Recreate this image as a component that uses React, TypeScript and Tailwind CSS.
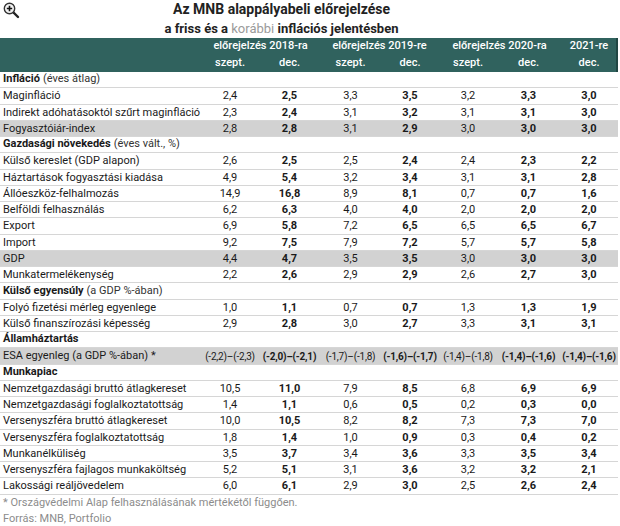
type Section = { kind: 'section'; bold: string; rest?: string }
type DataRow = { kind: 'data'; label: string; values: string[]; hl?: boolean; small?: boolean }
type Row = Section | DataRow

const sec = (bold: string, rest?: string): Section => ({ kind: 'section', bold, rest })
const row = (label: string, v: string, hl = false): DataRow => ({ kind: 'data', label, values: v.split(' '), hl })

const rows: Row[] = [
  sec('Infláció', '(éves átlag)'),
  row('Maginfláció', '2,4 2,5 3,3 3,5 3,2 3,3 3,0'),
  row('Indirekt adóhatásoktól szűrt maginfláció', '2,3 2,4 3,1 3,2 3,1 3,1 3,0'),
  row('Fogyasztóiár-index', '2,8 2,8 3,1 2,9 3,0 3,0 3,0', true),
  sec('Gazdasági növekedés', '(éves vált., %)'),
  row('Külső kereslet (GDP alapon)', '2,6 2,5 2,5 2,4 2,4 2,3 2,2'),
  row('Háztartások fogyasztási kiadása', '4,9 5,4 3,2 3,4 3,1 3,1 2,8'),
  row('Állóeszköz-felhalmozás', '14,9 16,8 8,9 8,1 0,7 0,7 1,6'),
  row('Belföldi felhasználás', '6,2 6,3 4,0 4,0 2,0 2,0 2,0'),
  row('Export', '6,9 5,8 7,2 6,5 6,5 6,5 6,7'),
  row('Import', '9,2 7,5 7,9 7,2 5,7 5,7 5,8'),
  row('GDP', '4,4 4,7 3,5 3,5 3,0 3,0 3,0', true),
  row('Munkatermelékenység', '2,2 2,6 2,9 2,9 2,6 2,7 3,0'),
  sec('Külső egyensúly', '(a GDP %-ában)'),
  row('Folyó fizetési mérleg egyenlege', '1,0 1,1 0,7 0,7 1,3 1,3 1,9'),
  row('Külső finanszírozási képesség', '2,9 2,8 3,0 2,7 3,3 3,1 3,1'),
  sec('Államháztartás'),
  {
    kind: 'data',
    label: 'ESA egyenleg (a GDP %-ában) *',
    values: ['(-2,2)–(-2,3)', '(-2,0)–(-2,1)', '(-1,7)–(-1,8)', '(-1,6)–(-1,7)', '(-1,4)–(-1,8)', '(-1,4)–(-1,6)', '(-1,4)–(-1,6)'],
    hl: true,
    small: true,
  },
  sec('Munkapiac'),
  row('Nemzetgazdasági bruttó átlagkereset', '10,5 11,0 7,9 8,5 6,8 6,9 6,9'),
  row('Nemzetgazdasági foglalkoztatottság', '1,4 1,1 0,6 0,5 0,2 0,3 0,0'),
  row('Versenyszféra bruttó átlagkereset', '10,0 10,5 8,2 8,2 7,3 7,3 7,0'),
  row('Versenyszféra foglalkoztatottság', '1,8 1,4 1,0 0,9 0,3 0,4 0,2'),
  row('Munkanélküliség', '3,5 3,7 3,4 3,6 3,3 3,5 3,4'),
  row('Versenyszféra fajlagos munkaköltség', '5,2 5,1 3,1 3,6 3,2 3,2 2,1'),
  row('Lakossági reáljövedelem', '6,0 6,1 2,9 3,0 2,5 2,6 2,4'),
]

// dec. columns are bold
const boldCol = [false, true, false, true, false, true, true]

const grid = 'grid grid-cols-[201px_58px_61px_61px_58px_58px_63px_58px]'

function Magnifier() {
  return (
    <svg width="18" height="18" viewBox="0 0 18 18" className="absolute left-[2px] top-[1px]">
      <line x1="11.5" y1="11.5" x2="16" y2="16" stroke="#222" strokeWidth="2.4" strokeLinecap="round" />
      <circle cx="7.5" cy="7.5" r="5.2" fill="#f4f4f4" stroke="#333" strokeWidth="1.4" />
      <path d="M7.5 4.8v5.4M4.8 7.5h5.4" stroke="#111" strokeWidth="1.6" />
    </svg>
  )
}

export default function App() {
  return (
    <div className="relative w-[620px] h-[526px] bg-white overflow-hidden font-['Roboto',sans-serif] text-[#1a1a1a]">
      <Magnifier />
      <div className="w-[563px] text-center font-bold leading-[19px] text-[#222]">
        <div className="text-[14px]">Az MNB alappályabeli előrejelzése</div>
        <div className="text-[13px]">
          a friss és a <span className="font-normal text-[#9a9a9a]">korábbi</span> inflációs jelentésben
        </div>
      </div>

      <div className="w-[618px]">
        <div className="bg-[#30625e] text-white text-[11px] font-medium border-r-2 border-[#214744]">
          <div className={`${grid} h-[17px] items-center`}>
            <div />
            <div className="col-span-2 text-center">előrejelzés 2018-ra</div>
            <div className="col-span-2 text-center">előrejelzés 2019-re</div>
            <div className="col-span-2 text-center">előrejelzés 2020-ra</div>
            <div className="text-center">2021-re</div>
          </div>
          <div className={`${grid} h-[17px] items-center`}>
            <div />
            {['szept.', 'dec.', 'szept.', 'dec.', 'szept.', 'dec.', 'dec.'].map((h, i) => (
              <div key={i} className="text-center">{h}</div>
            ))}
          </div>
        </div>

        {rows.map((r, i) =>
          r.kind === 'section' ? (
            <div key={i} className="h-[16.25px] flex items-center pl-[3px] text-[11px] border-b border-[#d6d6d6]">
              <span className="font-bold">{r.bold}</span>
              {r.rest && <span className="ml-[3px] text-[#333]">{r.rest}</span>}
            </div>
          ) : (
            <div
              key={i}
              className={`${grid} h-[16.25px] items-center text-[11px] border-b border-[#d6d6d6] ${r.hl ? 'bg-[#d2d2d2]' : ''}`}
            >
              <div className="pl-[3px] whitespace-nowrap">{r.label}</div>
              {r.values.map((v, j) => (
                <div
                  key={j}
                  className={`text-center whitespace-nowrap ${r.small ? 'text-[10px] tracking-[-0.2px]' : ''} ${boldCol[j] ? 'font-bold' : ''}`}
                >
                  {v}
                </div>
              ))}
            </div>
          )
        )}
      </div>

      <div className="pl-[3px] text-[11px] leading-[16px] text-[#8c8c8c]">
        <div>* Országvédelmi Alap felhasználásának mértékétől függően.</div>
        <div>Forrás: MNB, Portfolio</div>
      </div>
    </div>
  )
}
